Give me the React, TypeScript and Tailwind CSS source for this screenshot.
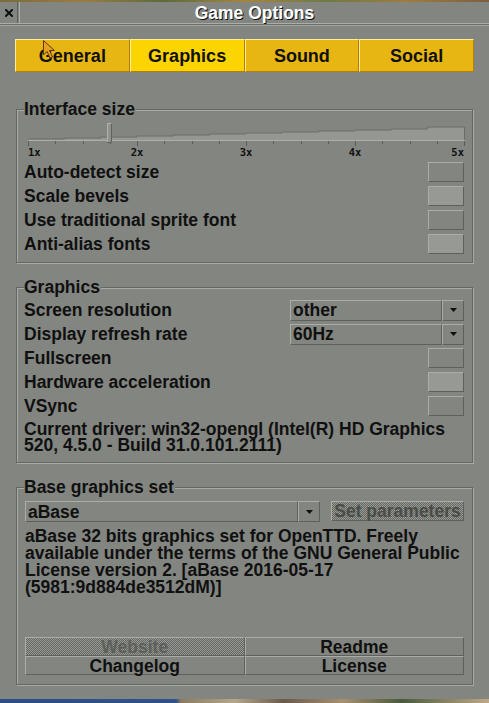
import React from "react";

const raised =
  "border border-t-[#abada8] border-l-[#abada8] border-r-[#5e605b] border-b-[#5e605b]";
const dither =
  "bg-[image:repeating-conic-gradient(#656762_0_25%,#989a95_0_50%)] bg-size-[2px_2px]";

function Frame({
  title,
  className = "",
  children,
}: {
  title: string;
  className?: string;
  children: React.ReactNode;
}) {
  return (
    <div
      className={`relative mx-[16px] border border-[#656762] shadow-[inset_1px_1px_0_#a8aaa5,1px_1px_0_#a8aaa5] ${className}`}
    >
      <span className="absolute left-[7px] top-[-10px] bg-[#838580] pr-[1px] leading-[18px] whitespace-nowrap">
        {title}
      </span>
      {children}
    </div>
  );
}

function Box({ on = false }: { on?: boolean }) {
  return <div className={`w-[36px] h-[20px] ${raised} ${on ? "bg-[#979994]" : ""}`} />;
}

function Row({ label, right }: { label: string; right?: React.ReactNode }) {
  return (
    <div className="flex h-[24px] items-center justify-between">
      <span className="leading-[18px] whitespace-nowrap">{label}</span>
      {right}
    </div>
  );
}

function Arrow() {
  return (
    <svg width="7" height="4" viewBox="0 0 7 4">
      <path d="M0 0h7L3.5 4z" fill="#101010" />
    </svg>
  );
}

function Dropdown({ value, className = "" }: { value: string; className?: string }) {
  return (
    <div className={`flex h-[21px] ${className}`}>
      <div className={`flex-1 ${raised} flex items-center pl-[2px] leading-[18px]`}>{value}</div>
      <div className={`w-[22px] ${raised} flex items-center justify-center`}>
        <Arrow />
      </div>
    </div>
  );
}

function Slider() {
  const base = 19;
  const x0 = 2;
  const x1 = 438;
  const steps = 12;
  const sw = (x1 - x0) / steps;
  const pts: string[] = [`${x0},${base}`];
  for (let k = 0; k < steps; k++) {
    const h = 1 + k + (k === steps - 1 ? 1 : 0);
    const a = x0 + k * sw;
    pts.push(`${a},${base - h}`, `${a + sw},${base - h}`);
  }
  pts.push(`${x1},${base}`);
  const ticks = Array.from({ length: 17 }, (_, i) => x0 + i * ((x1 - x0) / 16));
  const labels = ["1x", "2x", "3x", "4x", "5x"];
  return (
    <svg width="441" height="37" viewBox="0 0 441 37" className="block">
      <polygon points={pts.join(" ")} fill="#959792" />
      <polyline points={pts.slice(1, -1).join(" ")} fill="none" stroke="#6a6c67" strokeWidth="1" />
      <line x1={x1 + 0.5} y1={base - 13} x2={x1 + 0.5} y2={base} stroke="#6a6c67" />
      <line x1={x0} y1={base + 0.5} x2={x1 + 1} y2={base + 0.5} stroke="#adafaa" />
      {ticks.map((t, i) => (
        <line
          key={i}
          x1={Math.round(t) + 0.5}
          y1={base + 1}
          x2={Math.round(t) + 0.5}
          y2={base + (i % 4 === 0 ? 6 : 4)}
          stroke="#5a5c57"
        />
      ))}
      {labels.map((l, i) => (
        <text
          key={l}
          x={Math.round(ticks[i * 4])}
          y={35}
          fontSize="10.5"
          fontWeight="bold"
          fontFamily="'DejaVu Sans Mono', monospace"
          fill="#101010"
          textAnchor={i === 0 ? "start" : i === 4 ? "end" : "middle"}
        >
          {l}
        </text>
      ))}
      <rect x="81" y="2" width="5" height="20" fill="#8f918c" />
      <path d="M81.5 22V2.5H86" fill="none" stroke="#b0b2ad" />
      <path d="M85.5 2.5V21.5H81" fill="none" stroke="#5e605b" />
    </svg>
  );
}

function Btn({ label, disabled = false }: { label: string; disabled?: boolean }) {
  return (
    <div
      className={`flex-1 h-[19px] ${raised} flex items-center justify-center leading-[18px] ${
        disabled ? `${dither} text-[#5d5f5a]` : ""
      }`}
    >
      {label}
    </div>
  );
}

export default function App() {
  const tabs = ["General", "Graphics", "Sound", "Social"];
  return (
    <div className="relative w-[489px] h-[703px] overflow-hidden bg-[#838580] font-['Liberation_Sans',Arial,sans-serif] font-bold text-[17.5px] text-[#101010]">
      {/* map strip top */}
      <div className="h-[2px] bg-[linear-gradient(90deg,#7a6a3a,#9c7c42,#5b6b3b,#a5853f,#6f7a45,#a07b3c,#7a6040)]" />
      {/* title bar */}
      <div className="flex h-[21px]">
        <div className="w-[18px] border-r border-[#5e605b] flex items-center justify-center">
          <svg width="8" height="8" viewBox="0 0 8 8">
            <path d="M1 1L7 7M7 1L1 7" stroke="#101010" strokeWidth="2" strokeLinecap="square" />
          </svg>
        </div>
        <div className="ml-[1px] flex-1 border-l border-[#abada8] flex items-center justify-center">
          <span className="text-white text-[17.5px] leading-[18px] [text-shadow:1px_1px_0_#101010]">
            Game Options
          </span>
        </div>
      </div>
      <div className="h-[1px] bg-[#abada8]" />
      <div className="h-[1px] bg-[#6a6c67]" />
      <div className="h-[1px] bg-[#a3a5a0]" />

      {/* body */}
      <div className="h-[673px] pt-[13px]">
        <div className="mx-[15px] flex h-[33px]">
          {tabs.map((t) => (
            <div
              key={t}
              className={`flex-1 flex items-center justify-center border border-t-[#fcee9c] border-l-[#fcee9c] border-r-[#b47e08] border-b-[#b47e08] leading-[18px] text-[18px] ${
                t === "Graphics" ? "bg-[#fcd400]" : "bg-[#e7b612]"
              }`}
            >
              {t}
            </div>
          ))}
        </div>

        <Frame title="Interface size" className="mt-[37px] h-[154px] pl-[7px] pr-[8px] pt-[11px]">
          <div className="ml-[2px]">
            <Slider />
          </div>
          <div className="mt-[2px]">
            <Row label="Auto-detect size" right={<Box />} />
            <Row label="Scale bevels" right={<Box on />} />
            <Row label="Use traditional sprite font" right={<Box />} />
            <Row label="Anti-alias fonts" right={<Box on />} />
          </div>
        </Frame>

        <Frame title="Graphics" className="mt-[24px] h-[176px] pl-[7px] pr-[8px] pt-[10px]">
          <Row label="Screen resolution" right={<Dropdown value="other" className="w-[174px]" />} />
          <Row label="Display refresh rate" right={<Dropdown value="60Hz" className="w-[174px]" />} />
          <Row label="Fullscreen" right={<Box />} />
          <Row label="Hardware acceleration" right={<Box on />} />
          <Row label="VSync" right={<Box />} />
          <div className="mt-[3px] leading-[16px] whitespace-nowrap">
            <div>Current driver: win32-opengl (Intel(R) HD Graphics</div>
            <div>520, 4.5.0 - Build 31.0.101.2111)</div>
          </div>
        </Frame>

        <Frame
          title="Base graphics set"
          className="mt-[24px] h-[198px] pl-[8px] pr-[8px] pt-[13px] pb-[9px] flex flex-col"
        >
          <div className="flex h-[20px] items-stretch">
            <Dropdown value="aBase" className="w-[295px] h-[20px]" />
            <div
              className={`ml-[11px] w-[133px] ${raised} ${dither} flex items-center justify-center text-[#4a4c48] leading-[18px]`}
            >
              Set parameters
            </div>
          </div>
          <div className="mt-[7px] leading-[17px] whitespace-nowrap">
            <div>aBase 32 bits graphics set for OpenTTD. Freely</div>
            <div>available under the terms of the GNU General Public</div>
            <div>License version 2. [aBase 2016-05-17</div>
            <div>(5981:9d884de3512dM)]</div>
          </div>
          <div className="mt-auto">
            <div className="flex">
              <Btn label="Website" disabled />
              <Btn label="Readme" />
            </div>
            <div className="flex">
              <Btn label="Changelog" />
              <Btn label="License" />
            </div>
          </div>
        </Frame>
      </div>

      {/* map strip bottom */}
      <div className="h-[4px] bg-[linear-gradient(90deg,#2d4e85_0%,#2f5088_36%,#8a7a60_37%,#b5a58a_48%,#6a5a4a_58%,#a89070_70%,#4a5a3a_82%,#c0a888_100%)]" />

      {/* mouse cursor */}
      <svg
        className="absolute left-[43px] top-[40px]"
        width="13"
        height="19"
        viewBox="0 0 13 19"
      >
        <path
          d="M0.5 0.5L0.5 15L4 11.5L7 18L9.5 17L6.5 10.5L11.5 10.5Z"
          fill="#e8a020"
          stroke="#5a3a10"
          strokeWidth="1"
        />
      </svg>
    </div>
  );
}
